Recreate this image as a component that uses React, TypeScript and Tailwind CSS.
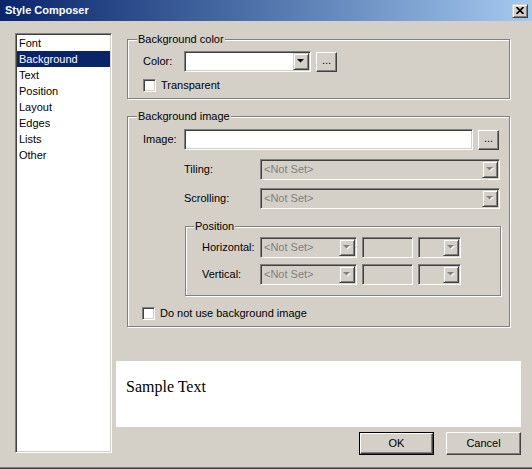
import React from "react";

const SUNKEN =
  "border border-t-[#808080] border-l-[#808080] border-b-white border-r-white shadow-[inset_1px_1px_#404040,inset_-1px_-1px_#d4d0c8]";
const RAISED =
  "border border-t-white border-l-white border-b-[#404040] border-r-[#404040] shadow-[inset_-1px_-1px_#808080]";
const RAISED2 =
  "border border-t-[#d4d0c8] border-l-[#d4d0c8] border-b-[#404040] border-r-[#404040] shadow-[inset_1px_1px_#ffffff,inset_-1px_-1px_#808080]";

function Arrow({ disabled }: { disabled?: boolean }) {
  return (
    <svg width="8" height="5" viewBox="0 0 8 5">
      {disabled ? (
        <>
          <polygon points="1,1 8,1 4.5,4.5" fill="#ffffff" />
          <polygon points="0,0 7,0 3.5,3.5" fill="#808080" />
        </>
      ) : (
        <polygon points="0,0 7,0 3.5,3.5" fill="#000000" />
      )}
    </svg>
  );
}

function Combo({
  width,
  disabled,
  text,
}: {
  width: string;
  disabled?: boolean;
  text?: string;
}) {
  return (
    <div
      className={`${SUNKEN} ${width} h-[21px] flex p-[1px] ${
        disabled ? "bg-[#d4d0c8]" : "bg-white"
      }`}
    >
      <div className="flex-1 flex items-center pl-[2px] text-[#808080] overflow-hidden whitespace-nowrap">
        {text}
      </div>
      <div className={`${RAISED2} w-[16px] h-[17px] flex items-center justify-center bg-[#d4d0c8]`}>
        <Arrow disabled={disabled} />
      </div>
    </div>
  );
}

function Checkbox({ label }: { label: string }) {
  return (
    <div className="flex items-center h-[13px]">
      <div className={`${SUNKEN} w-[13px] h-[13px] bg-white`} />
      <span className="ml-[5px] leading-[13px]">{label}</span>
    </div>
  );
}

function Group({
  legend,
  className,
  legendLeft,
  children,
}: {
  legend: string;
  className: string;
  legendLeft: string;
  children?: React.ReactNode;
}) {
  return (
    <div
      className={`relative border border-[#808080] shadow-[inset_1px_1px_#ffffff,1px_1px_#ffffff] ${className}`}
    >
      <span
        className={`absolute ${legendLeft} top-[-7px] px-[1px] bg-[#d4d0c8] leading-[13px] whitespace-nowrap`}
      >
        {legend}
      </span>
      {children}
    </div>
  );
}

function PushButton({ label, isDefault }: { label: string; isDefault?: boolean }) {
  if (isDefault) {
    return (
      <div className="w-[75px] h-[23px] border border-black">
        <div className={`${RAISED} w-full h-full flex items-center justify-center bg-[#d4d0c8]`}>
          {label}
        </div>
      </div>
    );
  }
  return (
    <div className={`${RAISED} w-[75px] h-[23px] flex items-center justify-center bg-[#d4d0c8]`}>
      {label}
    </div>
  );
}

function DotsButton() {
  return (
    <div className={`${RAISED} w-[21px] h-[20px] flex items-center justify-center bg-[#d4d0c8] leading-none pb-[3px]`}>
      ...
    </div>
  );
}

const items = ["Font", "Background", "Text", "Position", "Layout", "Edges", "Lists", "Other"];

export default function App() {
  return (
    <div className="w-[532px] h-[469px] bg-[#d4d0c8] flex flex-col font-['Liberation_Sans',Arial,sans-serif] text-[11px] text-black shadow-[inset_0_-1px_#404040,inset_0_-2px_#808080] overflow-hidden">
      {/* Title bar */}
      <div className="h-[21px] flex items-center bg-linear-to-r from-[#0a246a] to-[#a6caf0] shrink-0">
        <span className="pl-[5px] text-white font-bold text-[11px] leading-[13px]">Style Composer</span>
        <div className={`${RAISED2} ml-auto mr-[4px] w-[16px] h-[14px] flex items-center justify-center bg-[#d4d0c8]`}>
          <svg width="8" height="7" viewBox="0 0 8 7">
            <path d="M0.5 0L7.5 7M7.5 0L0.5 7" stroke="#000" strokeWidth="1.7" />
          </svg>
        </div>
      </div>

      {/* Body */}
      <div className="flex">
        {/* List */}
        <div className={`${SUNKEN} ml-[15px] mt-[12px] w-[97px] h-[420px] bg-white p-[1px]`}>
          {items.map((it) => (
            <div
              key={it}
              className={`h-[16px] leading-[16px] pl-[2px] ${
                it === "Background" ? "bg-[#0a246a] text-white" : ""
              }`}
            >
              {it}
            </div>
          ))}
        </div>

        {/* Right column */}
        <div className="ml-[4px] w-[405px] flex flex-col">
          <Group legend="Background color" className="ml-[11px] mt-[18px] w-[383px] h-[60px]" legendLeft="left-[9px]">
            <div className="pl-[15px] pt-[11px]">
              <div className="flex items-center">
                <span className="w-[41px]">Color:</span>
                <Combo width="w-[127px]" />
                <div className="ml-[5px]">
                  <DotsButton />
                </div>
              </div>
              <div className="mt-[7px]">
                <Checkbox label="Transparent" />
              </div>
            </div>
          </Group>

          <Group legend="Background image" className="ml-[11px] mt-[17px] w-[383px] h-[211px]" legendLeft="left-[9px]">
            <div className="pl-[15px] pt-[12px]">
              <div className="flex items-center">
                <span className="w-[41px]">Image:</span>
                <div className={`${SUNKEN} w-[289px] h-[21px] bg-white`} />
                <div className="ml-[5px]">
                  <DotsButton />
                </div>
              </div>
              <div className="flex items-center ml-[41px] mt-[9px]">
                <span className="w-[76px]">Tiling:</span>
                <Combo width="w-[240px]" disabled text="<Not Set>" />
              </div>
              <div className="flex items-center ml-[41px] mt-[8px]">
                <span className="w-[76px]">Scrolling:</span>
                <Combo width="w-[240px]" disabled text="<Not Set>" />
              </div>
              <Group legend="Position" className="ml-[42px] mt-[17px] w-[316px] h-[70px]" legendLeft="left-[8px]">
                <div className="pl-[16px] pt-[10px]">
                  <div className="flex items-center">
                    <span className="w-[58px]">Horizontal:</span>
                    <Combo width="w-[97px]" disabled text="<Not Set>" />
                    <div className={`${SUNKEN} ml-[5px] w-[51px] h-[21px] bg-[#d4d0c8]`} />
                    <div className="ml-[5px]">
                      <Combo width="w-[43px]" disabled />
                    </div>
                  </div>
                  <div className="flex items-center mt-[6px]">
                    <span className="w-[58px]">Vertical:</span>
                    <Combo width="w-[97px]" disabled text="<Not Set>" />
                    <div className={`${SUNKEN} ml-[5px] w-[51px] h-[21px] bg-[#d4d0c8]`} />
                    <div className="ml-[5px]">
                      <Combo width="w-[43px]" disabled />
                    </div>
                  </div>
                </div>
              </Group>
              <div className="mt-[11px] -ml-px">
                <Checkbox label="Do not use background image" />
              </div>
            </div>
          </Group>

          <div className="mt-[34px] h-[66px] bg-white pl-[10px] pt-[17px] font-['Liberation_Serif','Times_New_Roman',serif] text-[16px] leading-[18px]">
            Sample Text
          </div>

          <div className="mt-[5px] flex justify-end gap-[12px]">
            <PushButton label="OK" isDefault />
            <PushButton label="Cancel" />
          </div>
        </div>
      </div>
    </div>
  );
}
